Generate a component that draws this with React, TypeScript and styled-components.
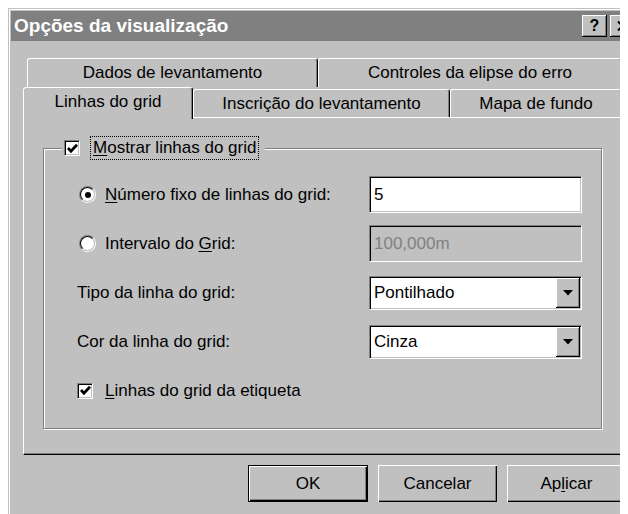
import styled, { createGlobalStyle } from 'styled-components';

const GlobalStyle = createGlobalStyle`
  html {
    overflow: hidden;
  }
  body {
    margin: 8px;
    background: #fff;
    font-family: "Liberation Sans", Arial, sans-serif;
    font-size: 17px;
    color: #000;
  }
`;

const Window = styled.div`
  box-sizing: border-box;
  width: 632px;
  height: 510px;
  padding: 3px;
  background: #c0c0c0;
  box-shadow: inset -1px -1px #000, inset 1px 1px #c0c0c0, inset -2px -2px #808080,
    inset 2px 2px #fff;
`;

const TitleBar = styled.div`
  display: flex;
  align-items: center;
  height: 30px;
  padding: 0 2px 0 3px;
  background: #808080;
`;

const Title = styled.div`
  flex: 1;
  font-weight: bold;
  font-size: 19px;
  color: #fff;
`;

const TitleButton = styled.div`
  box-sizing: border-box;
  display: flex;
  align-items: center;
  justify-content: center;
  width: 25px;
  height: 22px;
  margin-left: 3px;
  background: #c0c0c0;
  font-weight: bold;
  font-size: 16px;
  box-shadow: inset -1px -1px #000, inset 1px 1px #fff, inset -2px -2px #808080;
`;

const Content = styled.div`
  width: 603px;
  padding: 17px 0 0 12px;
`;

const TabRow = styled.div<{ $indent?: number }>`
  display: flex;
  align-items: flex-end;
  height: ${(p) => (p.$indent ? 29 : 30)}px;
  padding-left: ${(p) => p.$indent ?? 0}px;
`;

const Tab = styled.div<{ $w: number; $active?: boolean; $back?: boolean }>`
  box-sizing: border-box;
  display: flex;
  align-items: center;
  justify-content: center;
  width: ${(p) => p.$w}px;
  height: ${(p) => (p.$active ? 32 : p.$back ? 29 : 28)}px;
  margin-bottom: ${(p) => (p.$active ? -2 : 0)}px;
  padding-bottom: ${(p) => (p.$active ? 4 : 0)}px;
  position: relative;
  z-index: ${(p) => (p.$active ? 1 : 0)};
  background: #c0c0c0;
  border: 1px solid #fff;
  border-right-color: #000;
  border-bottom: none;
  border-radius: 3px 3px 0 0;
  box-shadow: inset -1px 0 #808080;
  white-space: nowrap;
`;

const Panel = styled.div`
  box-sizing: border-box;
  width: 602px;
  height: 338px;
  padding-top: 18px;
  border: 1px solid #fff;
  border-right-color: #000;
  border-bottom-color: #000;
  box-shadow: inset -1px -1px #808080;
`;

const Group = styled.fieldset`
  box-sizing: border-box;
  width: 559px;
  height: 293px;
  margin: 0 0 0 19px;
  padding: 10px 0 0 0;
  border: 1px solid #808080;
  box-shadow: inset 1px 1px #fff, 1px 1px #fff;
`;

const Legend = styled.legend`
  margin-left: 18px;
  padding: 0 7px 0 2px;
  background: #c0c0c0;
`;

const LegendInner = styled.div`
  display: flex;
  align-items: center;
  gap: 11px;
  height: 24px;
`;

const Focused = styled.span`
  padding: 0 2px;
  line-height: 22px;
  outline: 1px dotted #000;
`;

const Form = styled.div`
  display: grid;
  grid-template-columns: 292px 213px;
  grid-auto-rows: 49px;
  align-items: center;
  margin-left: 33px;
`;

const Option = styled.label<{ $gap: number }>`
  display: flex;
  align-items: center;
  gap: ${(p) => p.$gap}px;
  white-space: nowrap;
`;

const Wide = styled(Option)`
  grid-column: 1 / 3;
`;

const U = styled.span`
  text-decoration: underline;
  text-underline-offset: 2px;
`;

const Radio = styled.span<{ $on?: boolean }>`
  box-sizing: border-box;
  position: relative;
  display: inline-block;
  flex: none;
  width: 17px;
  height: 17px;
  margin-left: 2px;
  border-radius: 50%;
  border: 1px solid;
  border-color: #808080 #fff #fff #808080;
  &::before {
    content: '';
    position: absolute;
    inset: 0;
    border-radius: 50%;
    border: 1px solid;
    border-color: #000 #c0c0c0 #c0c0c0 #000;
    background: #fff;
  }
  &::after {
    content: '';
    display: ${(p) => (p.$on ? 'block' : 'none')};
    position: absolute;
    left: 4.5px;
    top: 4.5px;
    width: 6px;
    height: 6px;
    border-radius: 50%;
    background: #000;
  }
`;

const Check = styled.span`
  box-sizing: border-box;
  display: inline-flex;
  flex: none;
  align-items: center;
  justify-content: center;
  width: 16px;
  height: 16px;
  background: #fff;
  border: 1px solid;
  border-color: #808080 #fff #fff #808080;
  box-shadow: inset 1px 1px #000, inset -1px -1px #c0c0c0;
`;

const Field = styled.div<{ $h: number; $disabled?: boolean }>`
  box-sizing: border-box;
  display: flex;
  align-items: center;
  height: ${(p) => p.$h}px;
  padding-left: 4px;
  background: ${(p) => (p.$disabled ? '#c0c0c0' : '#fff')};
  color: ${(p) => (p.$disabled ? '#808080' : '#000')};
  border: 1px solid;
  border-color: #808080 #fff #fff #808080;
  box-shadow: inset 1px 1px #000, inset -1px -1px #c0c0c0;
`;

const FieldText = styled.span`
  flex: 1;
`;

const DropButton = styled.span`
  box-sizing: border-box;
  display: flex;
  align-items: center;
  justify-content: center;
  width: 24px;
  height: 30px;
  margin-right: 1px;
  background: #c0c0c0;
  box-shadow: inset -1px -1px #000, inset 1px 1px #fff, inset -2px -2px #808080;
`;

const ButtonRow = styled.div`
  display: flex;
  justify-content: flex-end;
  gap: 10px;
  margin-top: 10px;
`;

const Button = styled.div<{ $default?: boolean }>`
  box-sizing: border-box;
  display: flex;
  align-items: center;
  justify-content: center;
  width: ${(p) => (p.$default ? 120 : 119)}px;
  height: 37px;
  background: #c0c0c0;
  box-shadow: ${(p) =>
    p.$default
      ? 'inset 0 0 0 1px #000, inset 2px 2px #fff, inset -2px -2px #000, inset -3px -3px #808080'
      : 'inset 1px 1px #fff, inset -1px -1px #000, inset -2px -2px #808080'};
`;

const CheckMark = () => (
  <svg width="11" height="11" viewBox="0 0 7 7">
    <path d="M0.6 3.2 L2.5 5.2 L6.4 1.1" fill="none" stroke="#000" strokeWidth="1.8" />
  </svg>
);

const Arrow = () => (
  <svg width="10" height="6" viewBox="0 0 10 6">
    <polygon points="0,0 10,0 5,5.5" fill="#000" />
  </svg>
);

const CloseIcon = () => (
  <svg width="11" height="10" viewBox="0 0 11 10">
    <path d="M1 0.5 L10 9.5 M10 0.5 L1 9.5" stroke="#000" strokeWidth="2" />
  </svg>
);

const Select = ({ value }: { value: string }) => (
  <Field $h={34}>
    <FieldText>{value}</FieldText>
    <DropButton>
      <Arrow />
    </DropButton>
  </Field>
);

export default function App() {
  return (
    <>
      <GlobalStyle />
      <Window>
        <TitleBar>
          <Title>Opções da visualização</Title>
          <TitleButton>?</TitleButton>
          <TitleButton>
            <CloseIcon />
          </TitleButton>
        </TitleBar>

        <Content>
          <TabRow $indent={4}>
            <Tab $w={291} $back>Dados de levantamento</Tab>
            <Tab $w={304} $back>Controles da elipse do erro</Tab>
          </TabRow>
          <TabRow>
            <Tab $w={170} $active>Linhas do grid</Tab>
            <Tab $w={257}>Inscrição do levantamento</Tab>
            <Tab $w={172}>Mapa de fundo</Tab>
          </TabRow>

          <Panel>
            <Group>
              <Legend>
                <LegendInner>
                  <Check>
                    <CheckMark />
                  </Check>
                  <Focused>
                    <U>M</U>ostrar linhas do grid
                  </Focused>
                </LegendInner>
              </Legend>

              <Form>
                <Option $gap={9}>
                  <Radio $on />
                  <span>
                    <U>N</U>úmero fixo de linhas do grid:
                  </span>
                </Option>
                <Field $h={37}>5</Field>

                <Option $gap={9}>
                  <Radio />
                  <span>
                    Intervalo do <U>G</U>rid:
                  </span>
                </Option>
                <Field $h={37} $disabled>
                  100,000m
                </Field>

                <span>Tipo da linha do grid:</span>
                <Select value="Pontilhado" />

                <span>Cor da linha do grid:</span>
                <Select value="Cinza" />

                <Wide $gap={12}>
                  <Check>
                    <CheckMark />
                  </Check>
                  <span>
                    <U>L</U>inhas do grid da etiqueta
                  </span>
                </Wide>
              </Form>
            </Group>
          </Panel>

          <ButtonRow>
            <Button $default>OK</Button>
            <Button>Cancelar</Button>
            <Button>
              <span>
                Ap<U>l</U>icar
              </span>
            </Button>
          </ButtonRow>
        </Content>
      </Window>
    </>
  );
}
